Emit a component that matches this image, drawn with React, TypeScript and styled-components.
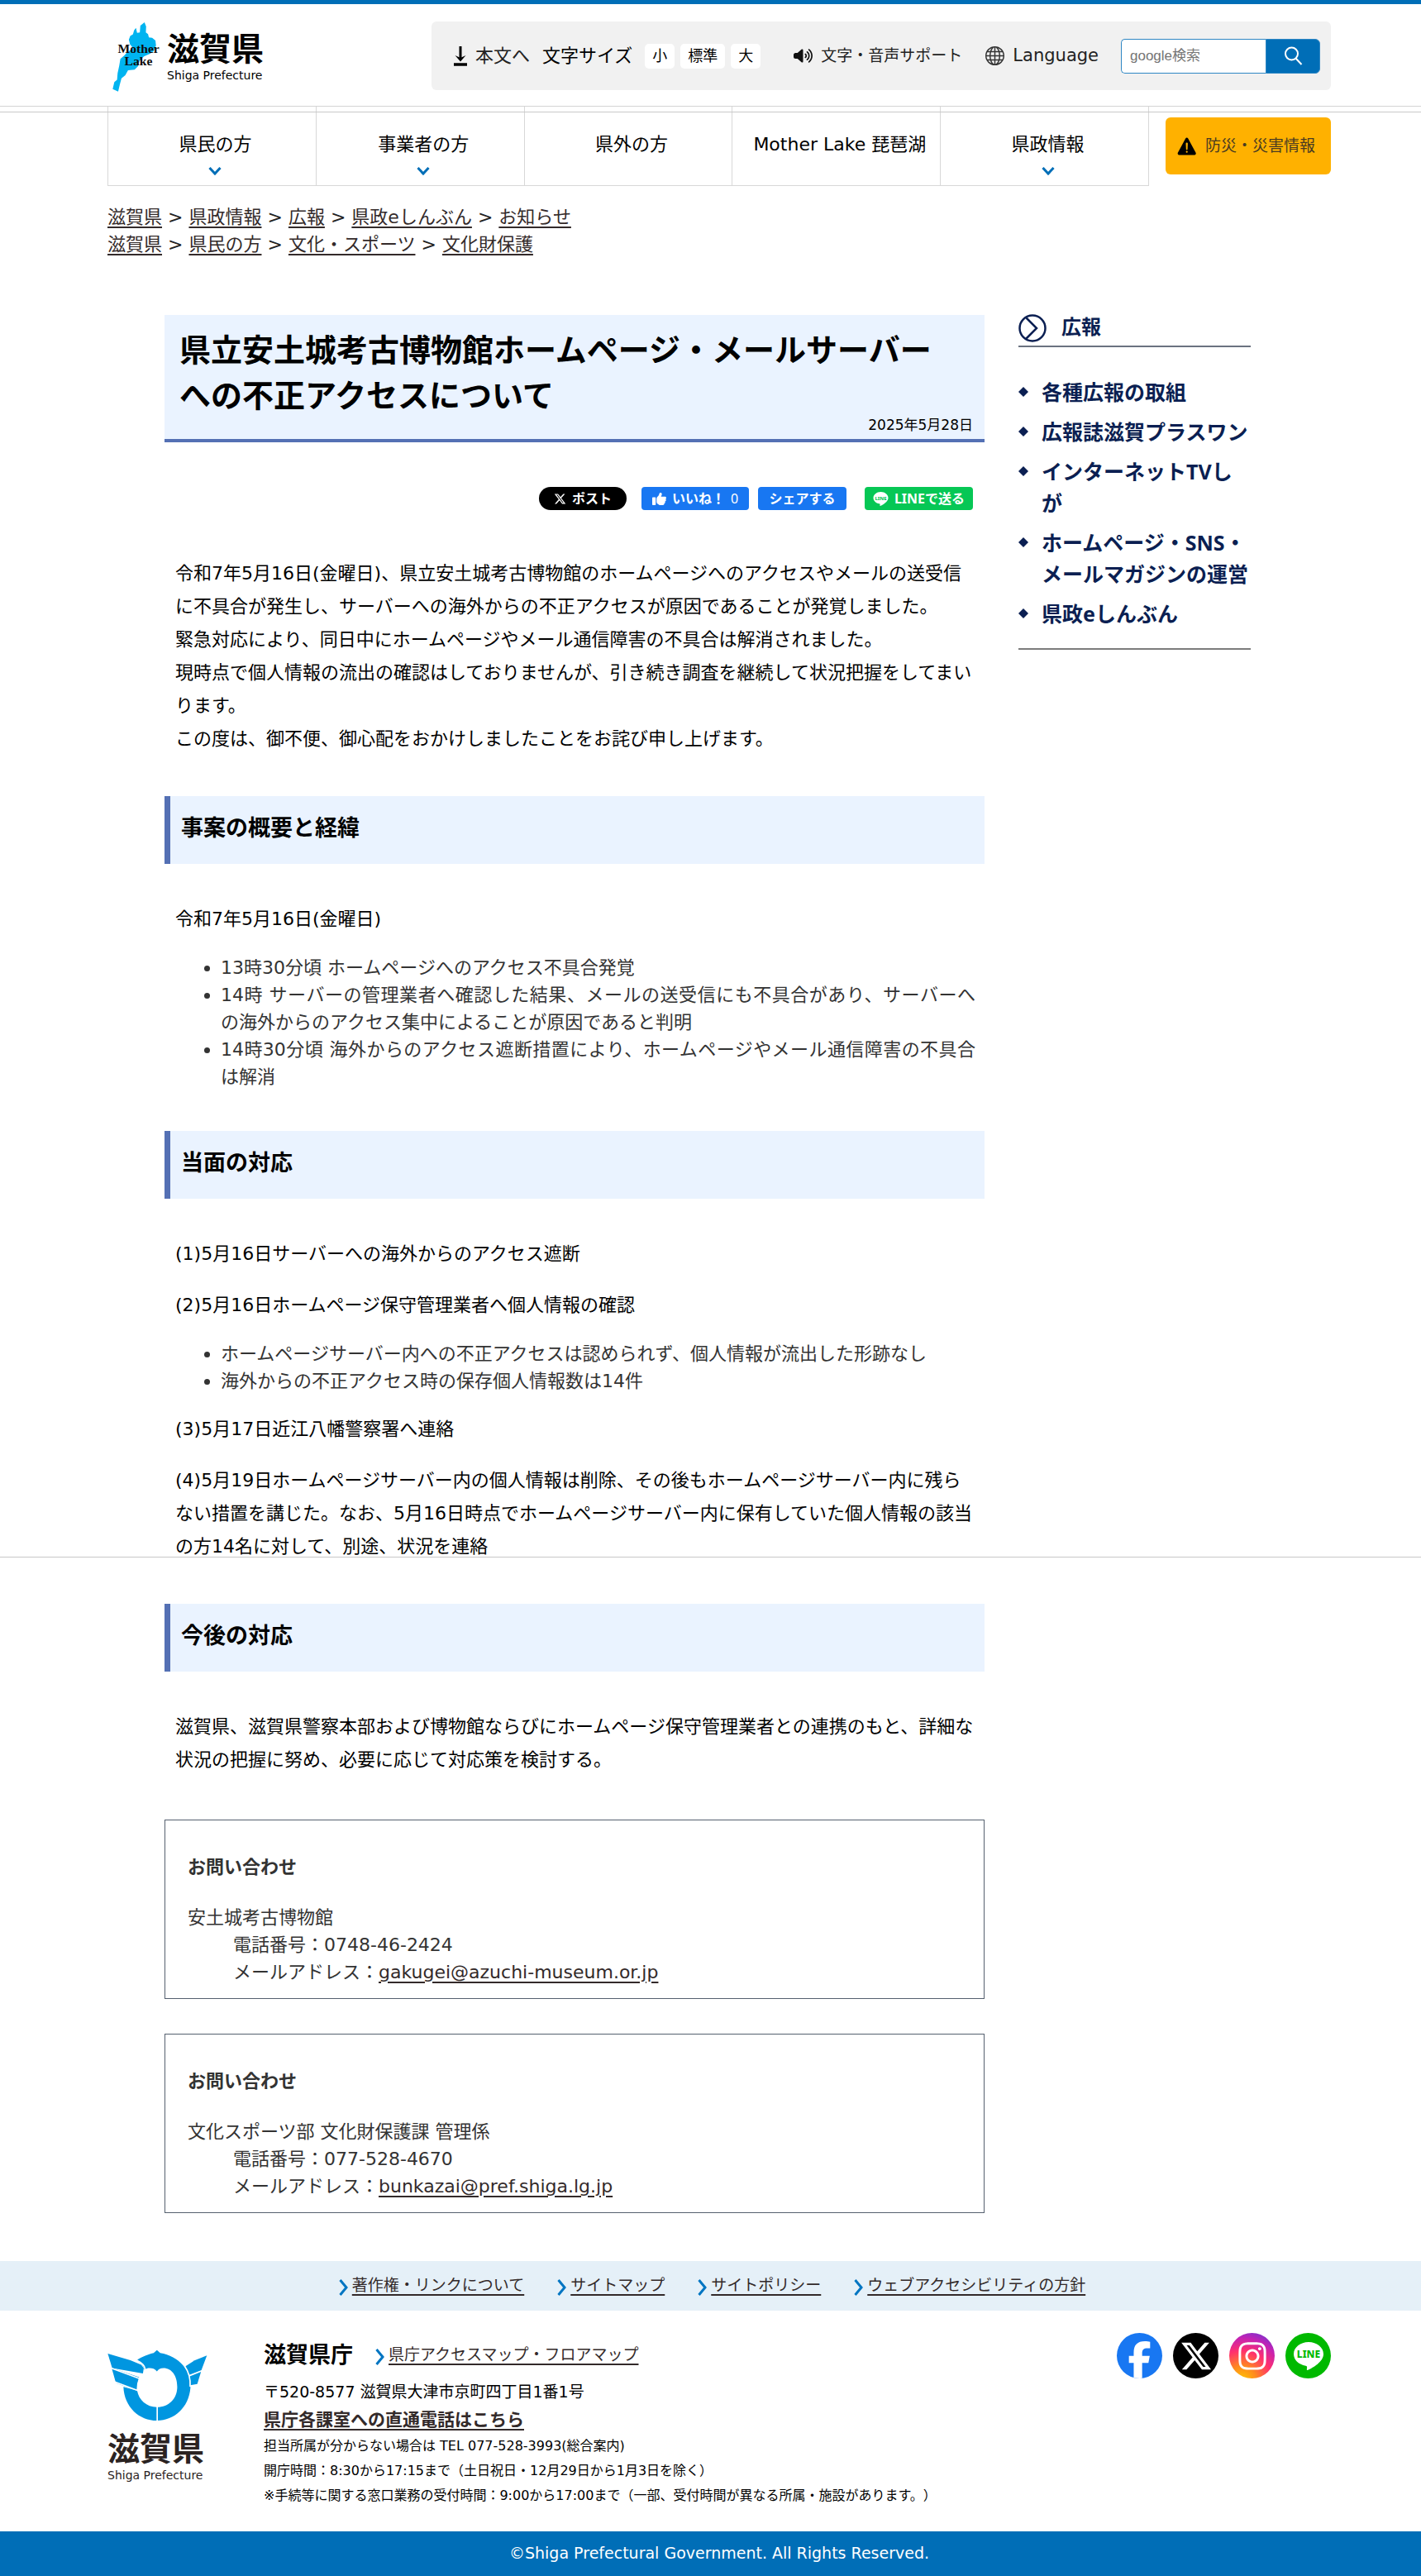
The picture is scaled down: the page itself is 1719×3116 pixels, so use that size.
import React from "react";
import styled, { createGlobalStyle, css } from "styled-components";
import { FaThumbsUp, FaInstagram, FaXTwitter, FaFacebookF, FaVolumeHigh } from "react-icons/fa6";
import { BsGlobe } from "react-icons/bs";
import { IoWarning } from "react-icons/io5";

const sans = `"DejaVu Sans", "Noto Sans CJK JP", sans-serif`;
const compact = `"Noto Sans", "Noto Sans CJK JP", sans-serif`;

const GlobalStyle = createGlobalStyle`
  *, *::before, *::after { box-sizing: border-box; }
  body {
    margin: 0;
    background: #fff;
    color: #000;
    font-family: ${sans};
    font-size: 22px;
    line-height: 33px;
    text-spacing-trim: space-all;
  }
  h1, h2, h3, p, ul, ol, dl, dd { margin: 0; padding: 0; }
  ul, ol { list-style: none; }
  svg { display: block; flex: none; }
  button, input { font: inherit; margin: 0; }
`;

const Page = styled.div`
  position: relative;
  border-top: 5px solid #006eb7;
`;

const Container = styled.div`
  margin: 0 109px 0 130px;
`;

const PageRule = styled.div`
  position: absolute;
  top: 1878px;
  left: 0;
  right: 0;
  height: 1px;
  background: #c8c8c8;
`;

/* header */

const HeaderRow = styled(Container)`
  display: flex;
  align-items: flex-start;
  justify-content: space-between;
  padding: 21px 0 16px;
`;

const Logo = styled.a`
  display: flex;
  align-items: center;
  gap: 8px;
  padding-left: 5px;
  color: #000;
  text-decoration: none;
`;

const LogoWords = styled.span`
  display: flex;
  flex-direction: column;
  color: ${(p: { $tone?: string }) => p.$tone || "#000"};
`;

const LogoName = styled.span`
  font-size: 39px;
  line-height: 44px;
  font-weight: 700;
`;

const LogoSub = styled.span`
  font-size: 14px;
  line-height: 18px;
`;

const Toolbar = styled.div`
  display: flex;
  align-items: center;
  height: 83px;
  padding: 0 13px 0 27px;
  border-radius: 6px;
  background: #f1f1f1;
`;

const ToolLink = styled.a<{ $size?: number }>`
  display: flex;
  align-items: center;
  gap: 10px;
  font-size: ${(p) => p.$size || 22}px;
  white-space: nowrap;
  color: #222;
  text-decoration: none;
`;

const SizeGroup = styled.div`
  display: flex;
  align-items: center;
  gap: 7px;
  margin: 0 40px 0 15px;
`;

const SizeLabel = styled.span`
  margin-right: 8px;
`;

const SizeButton = styled.button`
  height: 30px;
  padding: 0 9px;
  border: 0;
  border-radius: 5px;
  background: #fff;
  color: #000;
  font-size: 18px;
  line-height: 30px;
`;

const Tools = styled.div`
  display: flex;
  gap: 28px;
`;

const Search = styled.form`
  display: flex;
  width: 241px;
  height: 42px;
  margin-left: 27px;
`;

const SearchInput = styled.input`
  flex: 1;
  min-width: 0;
  padding: 0 10px;
  border: 1px solid #2f87c4;
  border-right: 0;
  border-radius: 5px 0 0 5px;
  background: #fff;
  font-family: "Liberation Sans", "Noto Sans CJK JP", sans-serif;
  font-size: 17px;
  &::placeholder { color: #757575; opacity: 1; }
`;

const SearchButton = styled.button`
  display: grid;
  place-items: center;
  width: 66px;
  padding: 0;
  border: 1px solid #2f87c4;
  border-radius: 0 6px 6px 0;
  background: #006eb7;
`;

/* global navigation */

const NavBand = styled.nav`
  position: relative;
  border-top: 1px solid #d4d4d4;
  &::after {
    content: "";
    position: absolute;
    top: 6px;
    left: 0;
    right: 0;
    height: 1px;
    background: #c8c8c8;
  }
`;

const NavRow = styled(Container)`
  display: flex;
  align-items: flex-start;
`;

const NavList = styled.ul`
  display: grid;
  grid-template-columns: repeat(5, 1fr);
  flex: 1;
  border-left: 1px solid #d8d8d8;
`;

const NavCell = styled.li`
  border: solid #d8d8d8;
  border-width: 0 1px 1px 0;
`;

const NavLink = styled.a`
  display: flex;
  flex-direction: column;
  align-items: center;
  gap: 11px;
  height: 95px;
  padding: 29px 0 0 8px;
  color: #000;
  text-decoration: none;
  white-space: nowrap;
`;

const Emergency = styled.a`
  display: flex;
  align-items: center;
  gap: 8px;
  width: 200px;
  height: 69px;
  margin: 13px 0 0 20px;
  padding-left: 12px;
  border-radius: 6px;
  background: #ffb100;
  color: #4a3b22;
  font-size: 19px;
  text-decoration: none;
`;

/* breadcrumb */

const inkLink = css`
  color: #332a2a;
  text-decoration: underline;
  text-decoration-thickness: 2px;
  text-underline-offset: 4px;
`;

const TextLink = styled.a`
  ${inkLink}
`;

const Crumbs = styled(Container)`
  padding: 21px 0 69px;
`;

const CrumbLine = styled.ol`
  display: flex;
  li + li::before {
    content: ">";
    margin: 0 7px;
    color: #222;
  }
`;

/* main */

const Body = styled(Container)`
  display: grid;
  grid-template-columns: minmax(0, 1fr) 281px;
  gap: 41px;
  align-items: start;
  padding: 0 97px 58px 69px;
`;

const TitleBox = styled.header`
  padding: 16px 0 10px;
  border-bottom: 4px solid #5470b4;
  background: #eaf3ff;
`;

const Title = styled.h1`
  padding: 0 40px 0 18px;
  font-size: 38px;
  line-height: 55px;
  font-weight: 700;
`;

const DateLine = styled.time`
  display: block;
  padding-right: 14px;
  font-size: 17px;
  line-height: 14px;
  text-align: right;
`;

const ShareRow = styled.div`
  display: flex;
  justify-content: flex-end;
  margin-top: 54px;
  padding-right: 14px;
`;

const ShareButton = styled.a<{ $bg: string; $gap?: number; $w: number; $round?: number }>`
  display: flex;
  align-items: center;
  justify-content: center;
  gap: 7px;
  width: ${(p) => p.$w}px;
  height: 28px;
  margin-left: ${(p) => p.$gap || 0}px;
  border-radius: ${(p) => p.$round || 4}px;
  background: ${(p) => p.$bg};
  color: #fff;
  font-family: ${compact};
  font-size: 16px;
  line-height: 28px;
  font-weight: 700;
  text-decoration: none;
  white-space: nowrap;
`;

const LikeCount = styled.span`
  font-weight: 400;
`;

const Content = styled.div`
  display: flex;
  flex-direction: column;
  gap: 22px;
  padding: 0 11px 0 13px;
`;

const Intro = styled(Content)`
  margin-top: 57px;
`;

const Para = styled.p`
  line-height: 40px;
`;

const Section = styled.section`
  margin-top: 49px;
  ${Content} { margin-top: 47px; }
`;

const SectionTitle = styled.h2`
  padding: 18px 13px 22px;
  border-left: 7px solid #5470b4;
  background: #eaf3ff;
  font-size: 27px;
  line-height: 42px;
  font-weight: 700;
`;

const Bullets = styled.ul`
  padding-left: 55px;
  list-style: disc;
  color: #333;
  text-align: justify;
`;

const ContactList = styled.div`
  display: flex;
  flex-direction: column;
  gap: 42px;
  margin-top: 52px;
`;

const ContactBox = styled.section`
  padding: 40px 27px 15px;
  border: 1px solid #55606f;
  color: #333;
`;

const ContactTitle = styled.h3`
  margin-bottom: 28px;
  font-size: 22px;
  font-weight: 700;
`;

const ContactLine = styled.p`
  padding-left: 55px;
`;

/* side column */

const SideTitle = styled.h2`
  display: flex;
  align-items: center;
  gap: 18px;
  height: 39px;
  padding-bottom: 6px;
  border-bottom: 2px solid #6b7280;
  color: #0b1f52;
  font-size: 24px;
`;

const SideList = styled.ul`
  display: flex;
  flex-direction: column;
  gap: 10px;
  padding: 35px 0 23px;
  border-bottom: 2px solid #7c7c7c;
`;

const SideLink = styled.a`
  display: flex;
  gap: 16px;
  color: #0b1f52;
  font-family: ${compact};
  font-size: 25px;
  line-height: 38px;
  font-weight: 700;
  text-decoration: none;
  svg { margin-top: 13px; }
`;

/* footer */

const FooterLinks = styled.nav`
  display: flex;
  justify-content: center;
  gap: 40px;
  padding: 13px 0 14px 4px;
  background: #e5f0f8;
`;

const ArrowLink = styled.span`
  display: flex;
  align-items: center;
  gap: 5px;
  font-size: 19px;
  svg { margin-top: 4px; }
`;

const FooterBody = styled(Container)`
  display: flex;
  align-items: flex-start;
  padding: 27px 0 28px;
`;

const Emblem = styled.div`
  display: flex;
  flex-direction: column;
  gap: 12px;
  width: 189px;
  padding-top: 20px;
`;

const Address = styled.div`
  flex: 1;
  padding-top: 10px;
`;

const OfficeRow = styled.div`
  display: flex;
  align-items: center;
  gap: 27px;
  margin-bottom: 11px;
`;

const OfficeName = styled.h2`
  font-size: 27px;
`;

const AddressLine = styled.p`
  font-size: 19px;
  line-height: 34px;
`;

const DirectLine = styled.p`
  font-size: 21px;
  line-height: 34px;
  font-weight: 700;
`;

const SmallLine = styled.p`
  font-size: 16px;
  line-height: 30px;
`;

const Socials = styled.div`
  display: flex;
  gap: 13px;
`;

const SocialLink = styled.a<{ $bg: string }>`
  display: grid;
  place-items: center;
  width: 55px;
  height: 55px;
  overflow: hidden;
  border-radius: 50%;
  background: ${(p) => p.$bg};
  color: #fff;
`;

const FacebookMark = styled(FaFacebookF)`
  align-self: end;
`;

const Copyright = styled.p`
  height: 54px;
  padding-left: 21px;
  background: #006eb7;
  color: #fff;
  font-size: 19px;
  line-height: 52px;
  text-align: center;
`;

/* drawings */

const Lake = () => (
  <svg width="59" height="86" viewBox="30 28 178 258" aria-hidden="true">
    <path
      fill="#00b4f0"
      d="M150 30l6 15-1 22 8 6 3 12 12 2 12 10 2 18-8 20-14 10-22 10-16 16-6 20-12 12-24 2-10 18-14 12-6 22-6 26-20-9 6-26 10-8 2-24 6-28 4-24 14-12 12-14 14-8 3-10-8-10-4-16 5-14 10-6 4-14 7-9 4 18 10-2 2-25z"
    />
    <g fill="#0c0c0c" fontFamily="Liberation Serif, serif" fontWeight="700" fontSize="47">
      <text x="53" y="143">Mother</text>
      <text x="77" y="188">Lake</text>
    </g>
  </svg>
);

const EmblemMark = () => (
  <svg width="121" height="87" viewBox="31 36 364 262" aria-hidden="true">
    <g fill="#0096e0">
      <path
        fillRule="evenodd"
        d="M137 76c18-14 46-23 62-27l12-11 12 11c34 6 62 20 84 46 22 26 28 54 26 82-6 70-58 118-122 118S92 246 89 172l50 14c6 34 34 60 72 60 44 0 74-32 74-74 0-40-20-68-50-68-12 0-18 4-24 12-8-9-16-12-26-12-8 0-14 2-20 6-2-18-14-26-28-34z"
      />
      <path d="M32 51l82 24 40 17 9 12-3 19-112-19z" />
      <path d="M46 103l100 34-8 26-78-10z" />
      <path d="M56 126l84 24-3 36-74-27z" />
      <path d="M393 58l-21 56-44 16-14-32 34-22z" />
      <path d="M372 116l-14 46-26 4-4-34z" />
    </g>
    <g stroke="#fff" strokeWidth="5" fill="none">
      <path d="M44 104l104 38M58 154l84 32M136 74c20 10 34 20 32 44" />
      <path d="M212 243v56" />
      <path d="M312 96c14 20 22 46 20 76M328 132l50-20" />
    </g>
  </svg>
);

const NavChevron = () => (
  <svg width="16" height="10" viewBox="0 0 16 10" aria-hidden="true">
    <path d="M1.500 1l6.500 7 6.500-7" fill="none" stroke="#006eb7" strokeWidth="3" />
  </svg>
);

const Arrow = () => (
  <svg width="11" height="20" viewBox="0 0 11 20" aria-hidden="true">
    <path d="M1.500 1l7.500 9-7.500 9" fill="none" stroke="#0075c2" strokeWidth="3" />
  </svg>
);

const Down = () => (
  <svg width="16" height="24" viewBox="0 0 16 24" aria-hidden="true">
    <path d="M8 0v15" stroke="#000" strokeWidth="3" />
    <path d="M1.500 11l6.500 7.500 6.500-7.500-6.500 3z" fill="#000" />
    <path d="M0 22h16" stroke="#000" strokeWidth="3.500" />
  </svg>
);

const Glass = () => (
  <svg width="23" height="23" viewBox="0 0 23 23" fill="none" stroke="#fff" strokeWidth="2" aria-hidden="true">
    <circle cx="9.500" cy="9" r="7.500" />
    <path d="M14.500 14.500l7 7.500" />
  </svg>
);

const SideMark = () => (
  <svg width="34" height="34" viewBox="0 0 34 34" fill="none" stroke="#0b1f52" strokeWidth="2.500" aria-hidden="true">
    <circle cx="17" cy="17" r="15.500" />
    <path d="M9.500 4.500L22 17 9.500 29.500" />
  </svg>
);

const Diamond = () => (
  <svg width="12" height="12" viewBox="0 0 12 12" aria-hidden="true">
    <path d="M6 0l6 6-6 6-6-6z" fill="#0b1f52" />
  </svg>
);

const LineBubble = ({ size, ink }: { size: number; ink: string }) => (
  <svg width={size} height={size} viewBox="0 0 38 38" aria-hidden="true">
    <path d="M19 2C9 2 1 8.500 1 16.500c0 7 6 12.800 14.500 14.200 2 .4 1.800 1.200 1.400 4-.2 1.400.7 1.600 2 .9C24 33 37 26 37 16.500 37 8.500 29 2 19 2z" fill="#fff" />
    <text x="19" y="21" textAnchor="middle" fill={ink} fontFamily="Noto Sans, sans-serif" fontWeight="800" fontSize="12">
      LINE
    </text>
  </svg>
);

/* content */

const navItems = [
  { label: "県民の方", open: true },
  { label: "事業者の方", open: true },
  { label: "県外の方", open: false },
  { label: "Mother Lake 琵琶湖", open: false },
  { label: "県政情報", open: true },
];

const trails = [
  ["滋賀県", "県政情報", "広報", "県政eしんぶん", "お知らせ"],
  ["滋賀県", "県民の方", "文化・スポーツ", "文化財保護"],
];

const sideItems = [
  "各種広報の取組",
  "広報誌滋賀プラスワン",
  "インターネットTVしが",
  "ホームページ・SNS・メールマガジンの運営",
  "県政eしんぶん",
];

const contacts = [
  { name: "安土城考古博物館", tel: "0748-46-2424", mail: "gakugei@azuchi-museum.or.jp" },
  { name: "文化スポーツ部 文化財保護課 管理係", tel: "077-528-4670", mail: "bunkazai@pref.shiga.lg.jp" },
];

const footerItems = ["著作権・リンクについて", "サイトマップ", "サイトポリシー", "ウェブアクセシビリティの方針"];

const instagram =
  "radial-gradient(circle at 28% 105%, #ffc800 0%, #ff8a1e 25%, #ff2f6e 52%, #c322b4 74%, #4a3fe0 100%)";

export default function App() {
  return (
    <Page>
      <GlobalStyle />
      <header>
        <HeaderRow>
          <Logo href="#">
            <Lake />
            <LogoWords>
              <LogoName>滋賀県</LogoName>
              <LogoSub>Shiga Prefecture</LogoSub>
            </LogoWords>
          </Logo>
          <Toolbar>
            <ToolLink href="#main">
              <Down />
              本文へ
            </ToolLink>
            <SizeGroup role="group" aria-label="文字サイズ">
              <SizeLabel>文字サイズ</SizeLabel>
              <SizeButton type="button">小</SizeButton>
              <SizeButton type="button">標準</SizeButton>
              <SizeButton type="button">大</SizeButton>
            </SizeGroup>
            <Tools>
              <ToolLink href="#" $size={19}>
                <FaVolumeHigh size={23} color="#111" />
                文字・音声サポート
              </ToolLink>
              <ToolLink href="#" $size={21}>
                <BsGlobe size={23} color="#333" />
                Language
              </ToolLink>
            </Tools>
            <Search role="search">
              <SearchInput type="search" placeholder="google検索" aria-label="google検索" />
              <SearchButton type="button" aria-label="検索">
                <Glass />
              </SearchButton>
            </Search>
          </Toolbar>
        </HeaderRow>
        <NavBand>
          <NavRow>
            <NavList>
              {navItems.map((n) => (
                <NavCell key={n.label}>
                  <NavLink href="#">
                    {n.label}
                    {n.open && <NavChevron />}
                  </NavLink>
                </NavCell>
              ))}
            </NavList>
            <Emergency href="#">
              <IoWarning size={28} color="#000" />
              防災・災害情報
            </Emergency>
          </NavRow>
        </NavBand>
        <Crumbs>
          {trails.map((trail, i) => (
            <CrumbLine key={i}>
              {trail.map((t) => (
                <li key={t}>
                  <TextLink href="#">{t}</TextLink>
                </li>
              ))}
            </CrumbLine>
          ))}
        </Crumbs>
      </header>

      <Body>
        <main id="main">
          <TitleBox>
            <Title>県立安土城考古博物館ホームページ・メールサーバーへの不正アクセスについて</Title>
            <DateLine>2025年5月28日</DateLine>
          </TitleBox>
          <ShareRow>
            <ShareButton href="#" $bg="#000" $w={106} $round={14}>
              <FaXTwitter size={15} />
              ポスト
            </ShareButton>
            <ShareButton href="#" $bg="#1877f2" $gap={18} $w={130}>
              <FaThumbsUp size={17} />
              いいね！
              <LikeCount>0</LikeCount>
            </ShareButton>
            <ShareButton href="#" $bg="#1877f2" $gap={11} $w={107}>
              シェアする
            </ShareButton>
            <ShareButton href="#" $bg="#06c755" $gap={22} $w={131}>
              <LineBubble size={19} ink="#06c755" />
              LINEで送る
            </ShareButton>
          </ShareRow>

          <Intro>
            <Para>
              令和7年5月16日(金曜日)、県立安土城考古博物館のホームページへのアクセスやメールの送受信に不具合が発生し、サーバーへの海外からの不正アクセスが原因であることが発覚しました。
              <br />
              緊急対応により、同日中にホームページやメール通信障害の不具合は解消されました。
              <br />
              現時点で個人情報の流出の確認はしておりませんが、引き続き調査を継続して状況把握をしてまいります。
              <br />
              この度は、御不便、御心配をおかけしましたことをお詫び申し上げます。
            </Para>
          </Intro>

          <Section>
            <SectionTitle>事案の概要と経緯</SectionTitle>
            <Content>
              <Para>令和7年5月16日(金曜日)</Para>
              <Bullets>
                <li>13時30分頃 ホームページへのアクセス不具合発覚</li>
                <li>14時 サーバーの管理業者へ確認した結果、メールの送受信にも不具合があり、サーバーへの海外からのアクセス集中によることが原因であると判明</li>
                <li>14時30分頃 海外からのアクセス遮断措置により、ホームページやメール通信障害の不具合は解消</li>
              </Bullets>
            </Content>
          </Section>

          <Section>
            <SectionTitle>当面の対応</SectionTitle>
            <Content>
              <Para>(1)5月16日サーバーへの海外からのアクセス遮断</Para>
              <Para>(2)5月16日ホームページ保守管理業者へ個人情報の確認</Para>
              <Bullets>
                <li>ホームページサーバー内への不正アクセスは認められず、個人情報が流出した形跡なし</li>
                <li>海外からの不正アクセス時の保存個人情報数は14件</li>
              </Bullets>
              <Para>(3)5月17日近江八幡警察署へ連絡</Para>
              <Para>
                (4)5月19日ホームページサーバー内の個人情報は削除、その後もホームページサーバー内に残らない措置を講じた。なお、5月16日時点でホームページサーバー内に保有していた個人情報の該当の方14名に対して、別途、状況を連絡
              </Para>
            </Content>
          </Section>

          <Section>
            <SectionTitle>今後の対応</SectionTitle>
            <Content>
              <Para>
                滋賀県、滋賀県警察本部および博物館ならびにホームページ保守管理業者との連携のもと、詳細な状況の把握に努め、必要に応じて対応策を検討する。
              </Para>
            </Content>
          </Section>

          <ContactList>
            {contacts.map((c) => (
              <ContactBox key={c.name}>
                <ContactTitle>お問い合わせ</ContactTitle>
                <p>{c.name}</p>
                <ContactLine>電話番号：{c.tel}</ContactLine>
                <ContactLine>
                  メールアドレス：<TextLink href={`mailto:${c.mail}`}>{c.mail}</TextLink>
                </ContactLine>
              </ContactBox>
            ))}
          </ContactList>
        </main>

        <aside>
          <SideTitle>
            <SideMark />
            広報
          </SideTitle>
          <SideList>
            {sideItems.map((s) => (
              <li key={s}>
                <SideLink href="#">
                  <Diamond />
                  <span>{s}</span>
                </SideLink>
              </li>
            ))}
          </SideList>
        </aside>
      </Body>

      <footer>
        <FooterLinks>
          {footerItems.map((f) => (
            <ArrowLink key={f}>
              <Arrow />
              <TextLink href="#">{f}</TextLink>
            </ArrowLink>
          ))}
        </FooterLinks>
        <FooterBody>
          <Emblem>
            <EmblemMark />
            <LogoWords $tone="#2b2322">
              <LogoName>滋賀県</LogoName>
              <LogoSub>Shiga Prefecture</LogoSub>
            </LogoWords>
          </Emblem>
          <Address>
            <OfficeRow>
              <OfficeName>滋賀県庁</OfficeName>
              <ArrowLink>
                <Arrow />
                <TextLink href="#">県庁アクセスマップ・フロアマップ</TextLink>
              </ArrowLink>
            </OfficeRow>
            <AddressLine>〒520-8577 滋賀県大津市京町四丁目1番1号</AddressLine>
            <DirectLine>
              <TextLink href="#">県庁各課室への直通電話はこちら</TextLink>
            </DirectLine>
            <SmallLine>担当所属が分からない場合は TEL 077-528-3993(総合案内)</SmallLine>
            <SmallLine>開庁時間：8:30から17:15まで（土日祝日・12月29日から1月3日を除く）</SmallLine>
            <SmallLine>※手続等に関する窓口業務の受付時間：9:00から17:00まで（一部、受付時間が異なる所属・施設があります。）</SmallLine>
          </Address>
          <Socials>
            <SocialLink href="#" aria-label="Facebook" $bg="#1877f2">
              <FacebookMark size={45} />
            </SocialLink>
            <SocialLink href="#" aria-label="X" $bg="#000">
              <FaXTwitter size={40} />
            </SocialLink>
            <SocialLink href="#" aria-label="Instagram" $bg={instagram}>
              <FaInstagram size={38} />
            </SocialLink>
            <SocialLink href="#" aria-label="LINE" $bg="#00b900">
              <LineBubble size={38} ink="#00b900" />
            </SocialLink>
          </Socials>
        </FooterBody>
        <Copyright>©Shiga Prefectural Government. All Rights Reserved.</Copyright>
      </footer>
      <PageRule />
    </Page>
  );
}
